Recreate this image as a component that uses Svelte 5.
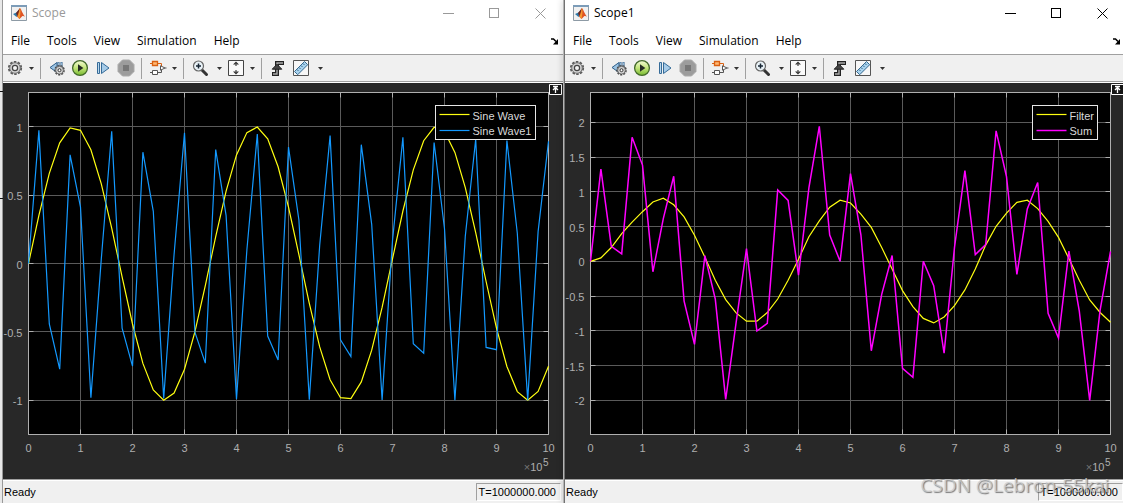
<script>
  const STEPS = 50;
  const steps = Array.from({ length: STEPS + 1 }, (_, n) => n);
  const slow = steps.map((n) => Math.sin(0.36 * n));
  const fast = steps.map((n) => Math.sin(1.8 * n));
  const sum = steps.map((n) => slow[n] + fast[n]);
  const filtered = [
    0, 0.05, 0.2, 0.4, 0.565, 0.715, 0.855, 0.91, 0.815, 0.64, 0.375, 0.06, -0.27, -0.55, -0.74,
    -0.86, -0.86, -0.735, -0.54, -0.27, 0.03, 0.355, 0.585, 0.78, 0.88, 0.84, 0.68, 0.49, 0.2,
    -0.11, -0.42, -0.65, -0.82, -0.885, -0.8, -0.635, -0.41, -0.11, 0.235, 0.505, 0.695, 0.85,
    0.88, 0.76, 0.575, 0.345, 0.04, -0.27, -0.555, -0.735, -0.875
  ];

  let sizes = $state([
    { w: 560, h: 396 },
    { w: 560, h: 396 }
  ]);

  const scopes = [
    {
      title: 'Scope',
      active: false,
      min: -1.25,
      max: 1.25,
      ticks: [1, 0.5, 0, -0.5, -1],
      legendWidth: 100,
      series: [
        { name: 'Sine Wave', color: '#ffff11', width: 1.2, data: slow },
        { name: 'Sine Wave1', color: '#1399ff', width: 1.2, data: fast }
      ]
    },
    {
      title: 'Scope1',
      active: true,
      min: -2.49,
      max: 2.43,
      ticks: [2, 1.5, 1, 0.5, 0, -0.5, -1, -1.5, -2],
      legendWidth: 65,
      series: [
        { name: 'Filter', color: '#ffff11', width: 1.2, data: filtered },
        { name: 'Sum', color: '#ff00ff', width: 1.5, data: sum }
      ]
    }
  ];

  const menus = ['File', 'Tools', 'View', 'Simulation', 'Help'];
  const tools = [
    ['gear', 'Configuration'],
    ['caret', 'Configuration options'],
    ['sep'],
    ['back', 'Stepping options'],
    ['play', 'Run'],
    ['forward', 'Step forward'],
    ['stop', 'Stop'],
    ['sep'],
    ['blocks', 'Highlight block'],
    ['caret', 'Highlight options'],
    ['sep'],
    ['zoom', 'Zoom'],
    ['caret wide', 'Zoom options'],
    ['fit', 'Scale axes'],
    ['caret', 'Scale options'],
    ['sep'],
    ['trigger', 'Triggers'],
    ['ruler', 'Measurements'],
    ['caret wide', 'Measurement options']
  ];
  const xTicks = Array.from({ length: 11 }, (_, i) => i);

  const L = 25.5;
  const T = 9.5;
  const right = (s) => s.w - 14.5;
  const bottom = (s) => s.h - 44.5;
  const px = (s, v) => L + ((right(s) - L) * v) / 10;
  const py = (s, c, v) => T + ((bottom(s) - T) * (c.max - v)) / (c.max - c.min);
  const snap = (v) => Math.floor(v) + 0.5;
  const line = (s, c, data) =>
    data.map((v, n) => `${px(s, n / 5).toFixed(1)},${py(s, c, v).toFixed(1)}`).join(' ');
</script>

{#snippet icon(name)}
  <svg class="icon" width="18" height="18" viewBox="0 0 18 18" aria-hidden="true">
    {#if name === 'gear'}
      <circle cx="9" cy="9" r="6.2" fill="none" stroke="#5a5a5a" stroke-width="1.8" stroke-dasharray="2.5 1.4" />
      <circle cx="9" cy="9" r="5.3" fill="#d2d2d2" stroke="#666" stroke-width=".9" />
      <circle cx="9" cy="9" r="2.6" fill="#f4f4f4" stroke="#444" stroke-width="1.2" />
    {:else if name === 'back'}
      <path d="M9 3.5 2 8.5l7 5z" fill="#9cc4e4" stroke="#2f5f8a" />
      <path d="M10.5 3v7M13.5 3v7" stroke="#2f5f8a" stroke-width="2" />
      <path d="M10.5 3.5v6M13.5 3.5v6" stroke="#a9cdea" stroke-width=".8" />
      <circle cx="11.5" cy="11.2" r="4.5" fill="none" stroke="#444" stroke-width="1.6" stroke-dasharray="2 1.1" />
      <circle cx="11.5" cy="11.2" r="3.9" fill="#d2d2d2" stroke="#555" stroke-width=".8" />
      <circle cx="11.5" cy="11.2" r="1.5" fill="#fff" stroke="#333" />
    {:else if name === 'play'}
      <defs>
        <linearGradient id="go" x2="0" y2="1">
          <stop offset="0" stop-color="#f4fbd6" /><stop offset=".5" stop-color="#c3e67b" /><stop offset="1" stop-color="#76b82e" />
        </linearGradient>
      </defs>
      <circle cx="9" cy="9" r="7.4" fill="url(#go)" stroke="#42692a" stroke-width="1.3" />
      <path d="M7 5.2 12.4 9 7 12.8z" fill="#252b24" />
    {:else if name === 'forward'}
      <path d="M3.5 3.5h2v11h-2z" fill="#b9d8ef" stroke="#356b98" />
      <path d="M7.5 3.5v11L15 9z" fill="#a6cbe8" stroke="#356b98" />
    {:else if name === 'stop'}
      <path d="M5.5 1h7L17 5.5v7L12.5 17h-7L1 12.5v-7z" fill="#9c9c9c" stroke="#aaa" />
      <path d="M6 6h6v6H6z" fill="#777" />
    {:else if name === 'blocks'}
      <path d="M9 13.5h3.5v-3M16 9h1.500M1 13.5h2" fill="none" stroke="#555" />
      <path d="M1 4.500h2M9 4.500h3.500v3" fill="none" stroke="#d96012" />
      <path d="M3.500 2.500h5v4h-5z" fill="#ffb873" stroke="#d96012" stroke-width="1.3" />
      <path d="M3.500 11.500h5v4h-5z" fill="#fff" stroke="#555" />
      <path d="M11.500 6.800v4.400L16 9z" fill="#fff" stroke="#555" />
    {:else if name === 'zoom'}
      <path d="m11 11 4.500 4.500" stroke="#333" stroke-width="3" stroke-linecap="round" />
      <circle cx="7.500" cy="7" r="5" fill="#eaf3f8" stroke="#666" stroke-width="1.200" />
      <path d="M5 7h5M7.500 4.500v5" stroke="#182634" stroke-width="1.500" />
    {:else if name === 'fit'}
      <path d="M1.500 1.500h15v15h-15z" fill="#fafafa" stroke="#444" />
      <path d="M9 2.500 6 5.500h6zM9 15.500l-3-3h6z" fill="#333" />
      <path d="M9 4.500v2.500M9 11v2.500" stroke="#666" stroke-width="1.500" />
    {:else if name === 'trigger'}
      <path d="M3 15h5V4h7" fill="none" stroke="#222" stroke-width="4" />
      <path d="M4 15h4V4h6" fill="none" stroke="#aaa" stroke-width="1.400" />
      <path d="M3.200 10.200h9.600L8 5.200z" fill="#444" stroke="#222" />
    {:else if name === 'ruler'}
      <path d="M1.500 1.500h15v15h-15z" fill="#f7f7f7" stroke="#555" />
      <path d="M2.500 12.500 12.500 2.500l3.200 3.200L5.700 15.700z" fill="#a9d3ee" stroke="#35688e" />
      <path d="m5 10.500 1.500 1.500M7 8.500l1.500 1.500M9 6.500 10.500 8M11 4.500 12.500 6" stroke="#35688e" />
    {/if}
  </svg>
{/snippet}

<main class="desktop">
  <div class="edge" aria-hidden="true"></div>
  {#each scopes as c, i}
    {@const s = sizes[i]}
    {#if i}<div class="divider" aria-hidden="true"></div>{/if}
    <section class="window" class:active={c.active} aria-label={c.title}>
      <header class="titlebar">
        <svg class="logo" width="16" height="16" viewBox="0 0 16 16" aria-hidden="true">
          <path d="M.5.500h15v15H.5z" fill="#f1f1f1" stroke="#8d9aa5" />
          <path d="M0 0h16v2H0z" fill="#7c9cb8" />
          <path d="m2 9 3.500-1.500L8 5l1 2-3.500 5z" fill="#2f79a8" />
          <path d="m5 8 4-5v6l-2.500 3z" fill="#6e2920" />
          <path d="M9 3c1.500 1.500 2.500 6 5 8.500-2-1-3-.8-4 1L8.500 14 6 11.500C7.500 9.500 8 5 9 3z" fill="#df5425" />
          <path d="M9 3c.6 2 .8 5-.5 11L6.500 11.500C8 9 8 6 9 3z" fill="#f39a31" />
        </svg>
        <h1>{c.title}</h1>
        <div class="controls">
          <button aria-label="Minimize"><svg width="11" height="11"><path d="M0 5.500h11" /></svg></button>
          <button aria-label="Maximize"><svg width="11" height="11"><path d="M.5.500h9v9h-9z" /></svg></button>
          <button aria-label="Close"><svg width="11" height="11"><path class="smooth" d="m.5.500 10 10m0-10-10 10" /></svg></button>
        </div>
      </header>
      <nav class="menubar">
        {#each menus as m}<button>{m}</button>{/each}
        <button class="dock" aria-label="Dock menu">
          <svg width="8" height="7" viewBox="0 0 8 7"><path d="M0 1h2.500L5 3.500" fill="none" stroke="#000" stroke-width="1.500" /><path d="M7 1v5.500H2z" /></svg>
        </button>
      </nav>
      <div class="toolbar" role="toolbar" aria-label="Scope tools">
        {#each tools as [kind, label]}
          {#if kind === 'sep'}
            <span class="sep"></span>
          {:else if kind.startsWith('caret')}
            <button class={kind} aria-label={label}><svg width="5" height="3"><path d="M0 0h5L2.500 3z" fill="#333" /></svg></button>
          {:else}
            <button class="tool" aria-label={label}>{@render icon(kind)}</button>
          {/if}
        {/each}
      </div>
      <div class="panel" bind:clientWidth={s.w} bind:clientHeight={s.h}>
        <svg class="plot" width={s.w} height={s.h} role="img" aria-label="{c.title} signals">
          <rect x={L} y={T} width={right(s) - L} height={bottom(s) - T} fill="#000" />
          <g class="grid">
            {#each xTicks.slice(1, -1) as t}
              <path d="M{snap(px(s, t))} {T}V{bottom(s)}" />
            {/each}
            {#each c.ticks as t}
              <path d="M{L} {snap(py(s, c, t))}H{right(s)}" />
            {/each}
          </g>
          <g class="axes">
            <rect x={L} y={T} width={right(s) - L} height={bottom(s) - T} />
            {#each xTicks as t}
              <path d="M{snap(px(s, t))} {T}v5M{snap(px(s, t))} {bottom(s)}v-5" />
            {/each}
            {#each c.ticks as t}
              <path d="M{L} {snap(py(s, c, t))}h5M{right(s)} {snap(py(s, c, t))}h-5" />
            {/each}
          </g>
          <g class="labels">
            {#each xTicks as t}
              <text x={px(s, t)} y={bottom(s) + 17.5} text-anchor="middle">{t}</text>
            {/each}
            {#each c.ticks as t}
              <text x={L - 6} y={py(s, c, t) + 5} text-anchor="end">{t}</text>
            {/each}
            <text x={right(s) - 6} y={bottom(s) + 36.5} text-anchor="end"><tspan class="times">×</tspan>10</text>
            <text class="power" x={right(s)} y={bottom(s) + 31.5} text-anchor="end">5</text>
          </g>
          {#each c.series as d}
            <polyline points={line(s, c, d.data)} fill="none" stroke={d.color} stroke-width={d.width} />
          {/each}
          <g transform="translate({right(s) - 13 - c.legendWidth} 22.5)">
            <rect class="legend" width={c.legendWidth} height="34" />
            {#each c.series as d, k}
              <path d="M4 {9 + k * 16}h30" stroke={d.color} stroke-width={d.width} />
              <text class="legend-text" x="37" y={14 + k * 15}>{d.name}</text>
            {/each}
          </g>
        </svg>
        <button class="expand" aria-label="Maximize axes">
          <svg width="13" height="11" viewBox="0 0 13 11">
            <path d="M.5.500h12v10H.5z" fill="#161616" stroke="#fff" />
            <path d="M4 2.500h5M6.500 3v6M4 6l2.500-2.500L9 6" fill="none" stroke="#fff" stroke-width="1.300" />
          </svg>
        </button>
      </div>
      <footer class="status">
        <span>Ready</span>
        <output>T=1000000.000</output>
      </footer>
    </section>
  {/each}
  <p class="watermark">CSDN @Lebron-55kai</p>
</main>

<style>
  :global(body) {
    margin: 0;
    overflow: hidden;
  }
  .desktop {
    position: relative;
    display: flex;
    height: 100vh;
    overflow: hidden;
    font: 12px/16px 'Open Sans', 'Noto Sans', sans-serif;
    color: #000;
  }
  .edge {
    flex: none;
    width: 3px;
    background:
      linear-gradient(#111, #111) 0 91px / 3px 1px no-repeat,
      linear-gradient(#111, #111) 0 198px / 3px 1px no-repeat,
      linear-gradient(90deg, #e8e8e8 0 2px, #999 2px);
  }
  .divider {
    flex: none;
    width: 2px;
    background: linear-gradient(90deg, #b5b5b5 0 1px, #727272 1px);
    box-shadow: 0 0 6px rgba(0, 0, 0, 0.35);
    z-index: 1;
  }
  .window {
    position: relative;
    flex: 1;
    min-width: 0;
    display: flex;
    flex-direction: column;
    background: #fff;
  }
  .window:last-of-type {
    margin-right: -2px;
    z-index: 2;
  }
  button {
    display: flex;
    align-items: center;
    justify-content: center;
    padding: 0;
    border: 0;
    background: none;
    font: inherit;
    color: inherit;
  }
  .titlebar {
    display: flex;
    align-items: center;
    height: 26px;
    padding-left: 8px;
    gap: 5px;
    color: #999;
  }
  .active .titlebar {
    color: #000;
  }
  h1 {
    margin: 0;
    font: inherit;
  }
  .controls {
    display: flex;
    margin-left: auto;
  }
  .controls button {
    width: 46px;
    height: 24px;
  }
  .controls path {
    fill: none;
    stroke: currentColor;
    shape-rendering: crispEdges;
  }
  .controls .smooth {
    shape-rendering: auto;
  }
  .menubar {
    display: flex;
    align-items: center;
    height: 26px;
    padding: 2px 4px 0 8px;
    gap: 17px;
    border-bottom: 1px solid #a0a0a0;
  }
  .dock {
    margin-left: auto;
  }
  .toolbar {
    display: flex;
    align-items: center;
    height: 26px;
    background: #f0f0f0;
    border-bottom: 1px solid #a0a0a0;
  }
  .tool {
    width: 23px;
    height: 24px;
  }
  .caret {
    width: 10px;
    height: 24px;
  }
  .wide {
    margin-left: 3px;
  }
  .sep {
    width: 1px;
    height: 21px;
    margin: 0 4px;
    background: #a0a0a0;
  }
  .panel {
    position: relative;
    flex: 1;
    min-height: 0;
    margin-top: 1px;
    background: #282828;
    overflow: hidden;
  }
  .plot {
    display: block;
    font: 11px 'Liberation Sans', Arial, sans-serif;
  }
  .grid path {
    stroke: #5a5a5a;
  }
  .axes path,
  .axes rect {
    fill: none;
    stroke: #afafaf;
  }
  .labels {
    fill: #afafaf;
  }
  .times {
    fill: #777;
  }
  .power {
    font-size: 10px;
  }
  .legend {
    fill: #000;
    stroke: #e6e6e6;
  }
  .legend-text {
    fill: #d9d9d9;
  }
  .expand {
    position: absolute;
    top: 1px;
    right: 1px;
  }
  .status {
    display: flex;
    align-items: center;
    justify-content: space-between;
    height: 23px;
    padding: 0 2px 0 1px;
    border-top: 1px solid #a0a0a0;
    box-shadow: inset 0 1px #fff;
    background: #f0f0f0;
    font: 11px/16px 'Liberation Sans', Arial, sans-serif;
  }
  output {
    padding: 0 4px 0 2px;
    border: 1px solid;
    border-color: #a0a0a0 #fff #fff #a0a0a0;
  }
  .watermark {
    position: absolute;
    right: 14px;
    bottom: 6px;
    z-index: 3;
    margin: 0;
    font: 19px/24px 'Open Sans', 'Noto Sans', sans-serif;
    color: rgba(205, 205, 205, 0.8);
    text-shadow: 1px 1px 1px rgba(90, 90, 90, 0.8);
  }
</style>
